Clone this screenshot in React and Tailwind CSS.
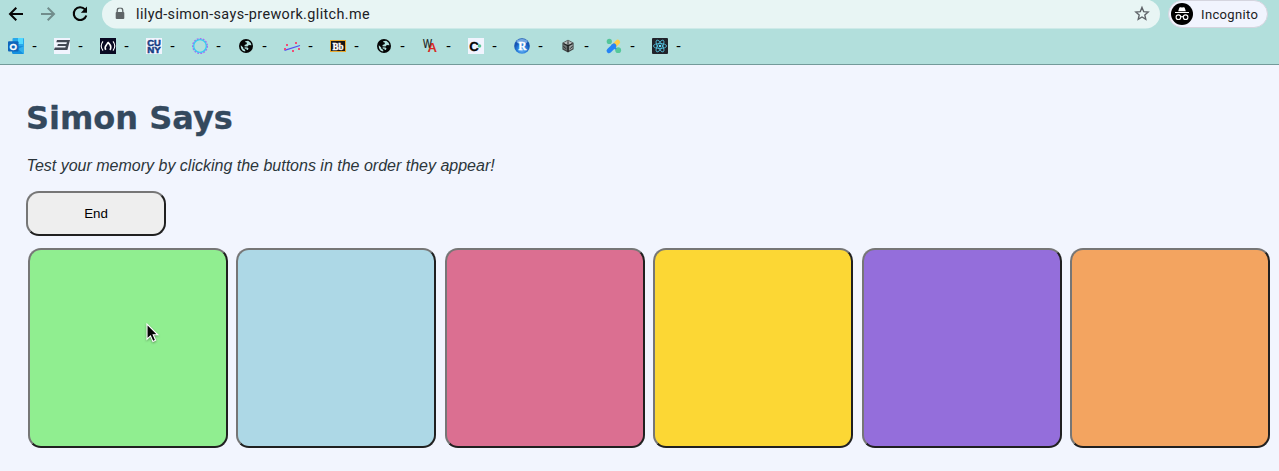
import React from "react";

function Globe() {
  return (
    <>
      <circle cx="8" cy="8" r="7" fill="#050505" />
      <path d="M2.8 7.2 5.2 9.4v1.1L7.2 12v1.5C4.6 13.2 2.5 11 2.8 7.2ZM7 3.2l3.2-.4 2.4 1.9.9 2.6-2.7-.2-1.3 1.4-3-.3.1-1.3 1.9-.7.6-1.5-1.5-.4ZM6.6 9.3l3 .2 1 1.2-1 1.4-1-.2V10.8H6.8Z" fill="#b2dfdc" />
    </>
  );
}

const bookmarks = [
  <>
    <rect x="4.5" width="11.5" height="13" rx="1" fill="#28a8ea" />
    <path d="M10 0h5v6h-5z" fill="#50d9ff" />
    <path d="M4 8h12v7.2l-.8.8H4.8L4 15Z" fill="#1490df" />
    <path d="m10 11 6-3v8Z" fill="#31afec" />
    <rect y="3.2" width="10.5" height="10.3" rx="1" fill="#0f65bb" />
    <text x="5.2" y="11.9" textAnchor="middle" fontFamily="Liberation Sans, sans-serif" fontWeight="700" fontSize="9.6" fill="#fff" stroke="#fff" strokeWidth=".3">O</text>
  </>,
  <>
    <path d="M0 0h16v16H0z" fill="#f1f4fe" />
    <path d="M3 2h13l-2.6 10H0l.8-2.5h10.5l.5-1.6H3.3l.6-2h8.5l.5-1.6H2.3Z" fill="#434855" />
  </>,
  <>
    <path d="M0 0h16v16H0z" fill="#0a0a23" />
    <path d="M3 3.4Q-.6 8 3 12.6M13 3.4Q16.6 8 13 12.6" fill="none" stroke="#fff" strokeWidth="1.1" />
    <path d="M5.7 11.8Q4.4 9.4 6.2 7.2T7.7 4.2Q10.9 7 10.8 9.2 10.8 11 9.8 11.8" fill="none" stroke="#fff" strokeWidth="1.6" />
  </>,
  <>
    <path d="M0 0h16v16H0z" fill="#f1f4fe" />
    <g fontFamily="Liberation Sans, sans-serif" fontWeight="700" fontSize="9.6" fill="#143c83" stroke="#143c83" strokeWidth=".5">
      <text x="1.2" y="7.9" textLength="13.6" lengthAdjust="spacingAndGlyphs">CU</text>
      <text x="1.2" y="15" textLength="13.6" lengthAdjust="spacingAndGlyphs">NY</text>
    </g>
  </>,
  <>
    <circle cx="8" cy="8" r="7.1" fill="none" stroke="#a96af5" strokeWidth="1.8" strokeDasharray="1.8 1.2" />
    <circle cx="8" cy="8" r="6.3" fill="none" stroke="#35cdf0" strokeWidth="1.3" />
  </>,
  <Globe />,
  <>
    <path d="M.5 12.4 16 7.5" stroke="#554df0" strokeWidth="1.2" />
    <path d="M0 10h2v2H0zM2 6h2v2H2zM8 12h2v2H8zM11 4h2v2h-2zM14 10h2v2h-2z" fill="#f04e76" />
  </>,
  <>
    <rect x=".5" y="2.5" width="15" height="11" fill="#151515" stroke="#e7a82e" />
    <text x="8" y="11.7" textAnchor="middle" textLength="11" lengthAdjust="spacingAndGlyphs" fontFamily="Liberation Serif, serif" fontWeight="700" fontSize="10" fill="#fff" stroke="#fff" strokeWidth=".4">Bb</text>
  </>,
  <Globe />,
  <>
    <text x="1" y="10" textLength="9" lengthAdjust="spacingAndGlyphs" fontFamily="Liberation Sans, sans-serif" fontSize="12.5" fill="#16191a" stroke="#16191a" strokeWidth=".2">W</text>
    <text x="5.5" y="14" textLength="9.5" lengthAdjust="spacingAndGlyphs" fontFamily="Liberation Sans, sans-serif" fontWeight="700" fontSize="12.5" fill="#d82a24">A</text>
  </>,
  <>
    <path d="M0 0h16v16H0z" fill="#f1f4fe" />
    <text x="1.3" y="12.7" fontFamily="Liberation Sans, sans-serif" fontWeight="700" fontSize="13.3" fill="#050505" stroke="#050505" strokeWidth=".3">C</text>
    <circle cx="11.5" cy="8" r="1.8" fill="#58c493" />
  </>,
  <>
    <defs><radialGradient id="blueBall" cy=".75"><stop stopColor="#6db5f7" /><stop offset=".65" stopColor="#247bd9" /><stop offset="1" stopColor="#1755b3" /></radialGradient></defs>
    <circle cx="8" cy="8" r="7.8" fill="url(#blueBall)" />
    <ellipse cx="8" cy="3.6" rx="5.5" ry="2.7" fill="#9ccbf5" opacity=".7" />
    <text x="8.3" y="12" textAnchor="middle" fontFamily="Liberation Serif, serif" fontWeight="700" fontSize="11.5" fill="#fff" stroke="#fff" strokeWidth=".3">R</text>
  </>,
  <>
    <path d="m8 1.8 5.6 3v6.5L8 14.4l-5.6-3V4.8Z" fill="#424747" />
    <path d="M8 2.5 12.8 5 8 7.4 3.2 5Z" fill="#b9bdbd" />
    <path d="m3.4 6.3 3.4 1.9v4.2l-3.4-2Z" fill="#737979" />
    <path d="m12.6 6.3-3.4 1.9v4.2l3.4-2Z" fill="#a6abab" />
    <path d="M8 3.2v4.5L3.7 5.5M8 7.7l4.3-2.2M8 7.7V14M3.6 8.2l2.2 2.5M12.4 8.2l-2.2 2.5" stroke="#1d2020" fill="none" />
  </>,
  <>
    <circle cx="3.3" cy="3.4" r="2.6" fill="#54c59a" />
    <circle cx="12.2" cy="12.2" r="2.9" fill="#55c89a" />
    <path d="m7.4 8.4 4.3-4.3" stroke="#ffcd48" strokeWidth="4.8" strokeLinecap="round" />
    <path d="m5.6 6.6 4.4 4.4" stroke="#2684f5" strokeWidth="2" />
    <path d="m3 12.8 5-4.9" stroke="#2684f5" strokeWidth="4.8" strokeLinecap="round" />
  </>,
  <>
    <rect width="16" height="16" rx="1" fill="#20232a" />
    <g fill="none" stroke="#51bfdc" strokeWidth=".85">
      <ellipse cx="8" cy="8" rx="6.6" ry="2.5" />
      <ellipse cx="8" cy="8" rx="6.6" ry="2.5" transform="rotate(60 8 8)" />
      <ellipse cx="8" cy="8" rx="6.6" ry="2.5" transform="rotate(120 8 8)" />
    </g>
    <circle cx="8" cy="8" r="1.3" fill="#61dafb" />
  </>,
];

function Browser() {
  return (
    <header className="h-[65px] border-b border-[#739a9a] bg-[#b2dfdc] text-[#202124]">
      <div className="flex h-[28px] items-center">
        <svg className="ml-[6px] h-5 w-5" viewBox="0 0 20 20" fill="none" stroke="#050505" strokeWidth="2"><path d="M17 10H4m6.3-6.3L4 10l6.3 6.3" /></svg>
        <svg className="ml-3 h-5 w-5" viewBox="0 0 20 20" fill="none" stroke="#718d8c" strokeWidth="2"><path d="M3 10h13m-6.3-6.3L16 10l-6.3 6.3" /></svg>
        <svg className="ml-3 h-5 w-5" viewBox="0 0 20 20" fill="none" stroke="#050505" strokeWidth="2.1"><path d="M15 5.4A6.4 6.4 0 1 0 16.3 11.5" /><path d="M17 2.5v6.2h-6.2Z" fill="#050505" stroke="none" /></svg>
        <div className="ml-3 flex h-[29px] w-[1058px] -translate-y-[0.5px] items-center rounded-full bg-[#e8f5f4]">
          <svg className="ml-[13px] h-3 w-[10px]" viewBox="0 0 10 12"><path d="M2.2 5V3.2a2.8 2.8 0 0 1 5.6 0V5" fill="none" stroke="#5f6567" strokeWidth="1.3" /><rect x=".7" y="4.4" width="8.6" height="7.2" rx="1" fill="#5f6567" /></svg>
          <span className="ml-[11px] pt-[2px] font-['Roboto',sans-serif] text-[14.4px] leading-5 tracking-[0.38px] whitespace-nowrap">lilyd-simon-says-prework.glitch.me</span>
          <svg className="mr-[10px] ml-auto h-4 w-4" viewBox="0 0 16 16" fill="none" stroke="#5f6368" strokeWidth="1.35"><path d="m8 1.9 1.7 4.2 4.5.4-3.4 2.9 1 4.4L8 11.5l-3.8 2.3 1-4.4-3.4-2.9 4.5-.4Z" /></svg>
        </div>
        <div className="ml-2 flex h-[28px] w-[100px] items-center rounded-full border border-[#d5d5df] bg-[#f1f4fe]">
          <svg className="ml-[2px] h-[22px] w-[22px]" viewBox="0 0 22 22">
            <circle cx="11" cy="11" r="11" fill="#000" />
            <path d="M7.2 8.2 8.3 4.8q.3-.9 1.2-.6l1.5.4 1.5-.4q.9-.3 1.2.6l1.1 3.4ZM4 9h14v1.1H4Z" fill="#fff" />
            <g fill="none" stroke="#fff" strokeWidth="1.1"><circle cx="7.4" cy="14.2" r="2.3" /><circle cx="14.6" cy="14.2" r="2.3" /><path d="M9.7 14q1.3-1 2.6 0" /></g>
          </svg>
          <span className="ml-[8px] pt-px font-['Roboto',sans-serif] text-[13px] leading-5 tracking-[0.35px]">Incognito</span>
        </div>
      </div>
      <nav className="flex h-9 items-center pl-2">
        {bookmarks.map((icon, i) => (
          <div key={i} className="flex h-4 w-[46px] items-center">
            <svg className="h-4 w-4 shrink-0 overflow-visible" viewBox="0 0 16 16">{icon}</svg>
            <span className="ml-[8px] font-['Liberation_Sans',sans-serif] text-[15px] leading-4 text-black">-</span>
          </div>
        ))}
      </nav>
    </header>
  );
}

const tiles = ["bg-[#90ee90]", "bg-[#add8e6]", "bg-[#db6f91]", "bg-[#fcd734]", "bg-[#946edb]", "bg-[#f3a460]"];

export default function App() {
  return (
    <div className="h-[471px] w-[1279px] overflow-hidden bg-[#f2f5fe]">
      <Browser />
      <main className="pl-[26px]">
        <h1 className="pt-[33px] font-['DejaVu_Sans',sans-serif] text-[32px] leading-[40px] font-bold text-[#34495e] [-webkit-text-stroke:0.3px_#34495e]">Simon Says</h1>
        <p className="mt-[18px] pl-[0.6px] font-['Liberation_Sans',sans-serif] text-[16px] leading-[20px] text-[#2c363b] italic">Test your memory by clicking the buttons in the order they appear!</p>
        <button className="mt-[15px] block h-[45px] w-[140px] rounded-[13px] border-2 border-t-[#767676] border-r-[#202020] border-b-[#202020] border-l-[#767676] bg-[#eeeeee] font-['Liberation_Sans',sans-serif] text-[13.333px] leading-4 text-black">End</button>
        <div className="mt-[12px] ml-[2px] flex w-[1242px] justify-between">
          {tiles.map((color, i) => (
            <div key={color} className={color + " h-[200px] w-[200px] rounded-[13px] border-2 border-t-[#767676] border-r-[#202020] border-b-[#202020] border-l-[#767676]"}>
              {i === 0 && (
                <svg className="mt-[73px] ml-[116px] h-[21px] w-[14px] overflow-visible drop-shadow-[0_1px_1px_rgba(0,0,0,0.35)]" viewBox="0 0 14 21"><path d="M1 1v15.2l3.5-3.3 2.4 5.5 2.7-1.2-2.4-5.4h4.6Z" fill="#050505" stroke="#fff" strokeWidth="1.1" /></svg>
              )}
            </div>
          ))}
        </div>
      </main>
    </div>
  );
}
